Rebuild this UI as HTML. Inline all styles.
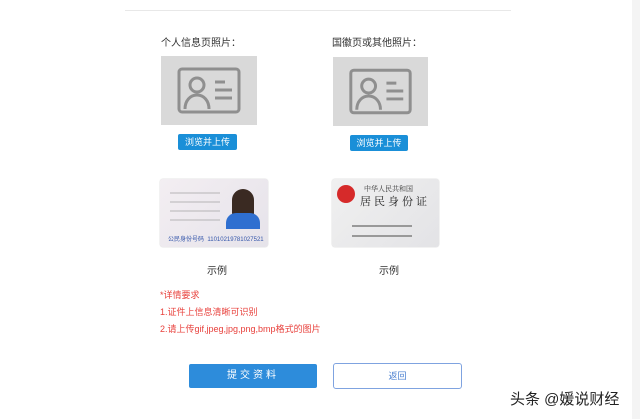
<!DOCTYPE html>
<html><head><meta charset="utf-8"><style>
body{margin:0;width:640px;height:419px;background:#fff;position:relative;overflow:hidden;font-family:"Liberation Sans","Noto Sans CJK SC",sans-serif;}
.a{position:absolute}
.ph{background:#d9d9d9}
.btn{background:#1a8fd8;color:#fff;font-size:9px;text-align:center;line-height:16px;border-radius:2px}
.lbl{font-size:10px;color:#333}
.red{color:#e8413c;font-size:9px}
</style></head><body>
<div class="a" style="left:125px;top:10px;width:386px;height:1px;background:#e8e8e8"></div>
<div class="a" style="left:632px;top:0;width:8px;height:419px;background:#f4f4f4"></div>
<div class="a lbl" style="left:161px;top:34px">个人信息页照片：</div>
<div class="a lbl" style="left:332px;top:34px">国徽页或其他照片：</div>
<svg class="a ph" style="left:161px;top:56px" width="96" height="69" viewBox="0 0 96 69"><g fill="none" stroke="#8f8f8f" stroke-width="3"><rect x="18" y="13" width="60" height="43" rx="3"/><circle cx="36" cy="29" r="7"/><path d="M24 53c0-8 5-14 12-14s12 6 12 14M54 26h10M54 34h17M54 42h17"/></g></svg>
<svg class="a ph" style="left:333px;top:57px" width="95" height="69" viewBox="0 0 96 69"><g fill="none" stroke="#8f8f8f" stroke-width="3"><rect x="18" y="13" width="60" height="43" rx="3"/><circle cx="36" cy="29" r="7"/><path d="M24 53c0-8 5-14 12-14s12 6 12 14M54 26h10M54 34h17M54 42h17"/></g></svg>
<div class="a btn" style="left:178px;top:134px;width:59px;height:16px">浏览并上传</div>
<div class="a btn" style="left:350px;top:135px;width:58px;height:16px">浏览并上传</div>
<div class="a" style="left:160px;top:179px;width:108px;height:68px;background:linear-gradient(135deg,#f3eef2,#e6e3ea);border-radius:3px;box-shadow:0 0 1px #aaa;overflow:hidden">
<div class="a" style="left:72px;top:10px;width:22px;height:28px;background:#3a2a22;border-radius:11px 11px 4px 4px"></div>
<div class="a" style="left:66px;top:34px;width:34px;height:16px;background:#2f6fd0;border-radius:10px 10px 0 0"></div>
<div class="a" style="left:8px;top:55px;font-size:6px;color:#35a;white-space:nowrap">公民身份号码 &nbsp;11010219781027521</div>
<div class="a" style="left:10px;top:8px;width:50px;height:40px;background:repeating-linear-gradient(#fff0 0 5px,#9990 5px,#999a 6px,#fff0 7px 9px)"></div>
</div>
<div class="a" style="left:332px;top:179px;width:107px;height:68px;background:linear-gradient(135deg,#f0f0f0,#e3e3e6);border-radius:3px;box-shadow:0 0 1px #aaa;overflow:hidden">
<div class="a" style="left:5px;top:6px;width:18px;height:18px;background:#d62a2a;border-radius:50%"></div>
<div class="a" style="left:32px;top:5px;font-size:7px;color:#333;font-family:'Noto Serif CJK SC',serif;white-space:nowrap">中华人民共和国</div>
<div class="a" style="left:28px;top:14px;font-size:11px;color:#222;font-family:'Noto Serif CJK SC',serif;white-space:nowrap;letter-spacing:3px">居民身份证</div>
<div class="a" style="left:20px;top:46px;width:60px;height:2px;background:#999"></div>
<div class="a" style="left:20px;top:56px;width:60px;height:2px;background:#999"></div>
</div>
<div class="a lbl" style="left:207px;top:262px">示例</div>
<div class="a lbl" style="left:379px;top:262px">示例</div>
<div class="a red" style="left:160px;top:288px">*详情要求</div>
<div class="a red" style="left:160px;top:305px">1.证件上信息清晰可识别</div>
<div class="a red" style="left:160px;top:322px">2.请上传gif,jpeg,jpg,png,bmp格式的图片</div>
<div class="a" style="left:189px;top:364px;width:128px;height:24px;background:#2d8cdb;border-radius:2px;color:#fff;font-size:10px;text-align:center;line-height:24px;letter-spacing:3px">提交资料</div>
<div class="a" style="left:333px;top:363px;width:127px;height:24px;border:1px solid #7fa3e0;border-radius:3px;color:#4a7fd0;font-size:9px;text-align:center;line-height:24px">返回</div>
<div class="a" style="left:510px;top:388px;font-size:15px;color:#222;white-space:nowrap">头条 @媛说财经</div>
</body></html>
